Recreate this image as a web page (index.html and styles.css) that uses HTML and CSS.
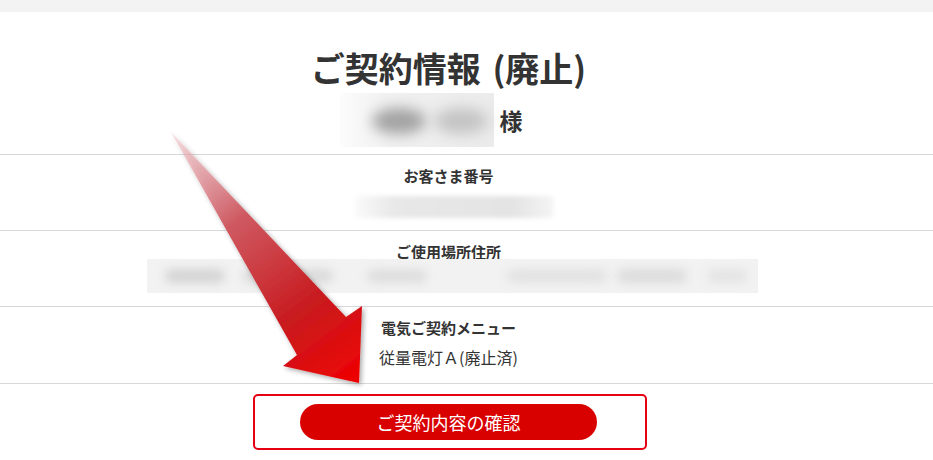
FILE: index.html
```html
<!DOCTYPE html>
<html lang="ja">
<head>
<meta charset="utf-8">
<title>ご契約情報 (廃止)</title>
<link rel="stylesheet" href="styles.css">
</head>
<body>
<div class="page">
  <div class="topbar"></div>
  <header class="head">
    <h1 class="title">ご契約情報 <span class="paren">(廃止)</span></h1>
    <div class="name-row">
      <div class="name-blur"><span class="blob b1"></span><span class="blob b2"></span></div>
      <span class="sama">様</span>
    </div>
  </header>
  <section class="row r1">
    <div class="label">お客さま番号</div>
    <div class="blur-num"></div>
  </section>
  <section class="row r2">
    <div class="label">ご使用場所住所</div>
    <div class="blur-addr">
      <span class="ab a1"></span><span class="ab a2"></span><span class="ab a3"></span><span class="ab a4"></span><span class="ab a5"></span><span class="ab a6"></span>
    </div>
  </section>
  <section class="row r3">
    <div class="label">電気ご契約メニュー</div>
    <div class="value">従量電灯Ａ(廃止済)</div>
  </section>
  <footer class="foot">
    <div class="frame">
      <button class="btn">ご契約内容の確認</button>
    </div>
  </footer>

  <svg class="arrow" width="933" height="460" viewBox="0 0 933 460">
    <defs>
      <linearGradient id="ag" gradientUnits="userSpaceOnUse" x1="171" y1="132" x2="359" y2="383">
        <stop offset="0" stop-color="#f2c4ca" stop-opacity="0.5"/>
        <stop offset="0.35" stop-color="#cf5a62"/>
        <stop offset="0.7" stop-color="#c81c20"/>
        <stop offset="1" stop-color="#f00000"/>
      </linearGradient>
      <filter id="sh" x="-20%" y="-20%" width="140%" height="140%">
        <feDropShadow dx="2" dy="2" stdDeviation="2.5" flood-color="#000" flood-opacity="0.35"/>
      </filter>
    </defs>
    <polygon points="171,132 346,317 362,306 359,383 283,366 297,355" fill="url(#ag)" filter="url(#sh)"/>
  </svg>
</div>
</body>
</html>
```
FILE: styles.css
```css
* { box-sizing: border-box; }
html, body { margin: 0; padding: 0; background: #fff; }
body {
  font-family: "Noto Sans CJK JP", "Noto Sans", sans-serif;
  color: #333;
}
.page { position: relative; width: 933px; height: 460px; overflow: hidden; }
.topbar { height: 12px; background: #f3f3f3; }

.head {
  padding: 34px 36px 0 0;
  height: 142px;
  display: flex;
  flex-direction: column;
  align-items: center;
}
.title {
  margin: 0;
  font-size: 34px;
  line-height: 44px;
  font-weight: 700;
  color: #333;
}
.paren { margin-left: 4px; }
.name-row {
  margin-top: 3px;
  display: flex;
  align-items: center;
  padding-right: 35px;
}
.name-blur {
  position: relative;
  width: 154px;
  height: 54px;
  background: linear-gradient(90deg, #fcfcfc 0%, #f1f1f1 30%, #ebebeb 100%);
}
.blob {
  position: absolute;
  top: 15px;
  height: 26px;
  border-radius: 50%;
  filter: blur(7px);
}
.b1 { left: 32px; width: 54px; background: #a2a2a2; }
.b2 { left: 94px; width: 54px; background: #c4c4c4; }
.sama {
  margin-left: 6px;
  font-size: 23px;
  font-weight: 700;
  color: #333;
}

.row {
  border-top: 1px solid #d8d8d8;
  height: 76px;
  padding: 11px 36px 0 0;
  display: flex;
  flex-direction: column;
  align-items: center;
}
.r3 { height: 77px; }
.label {
  font-size: 15px;
  line-height: 20px;
  font-weight: 700;
  color: #333;
}
.blur-num {
  margin-top: 10px;
  margin-left: 10px;
  width: 198px;
  height: 22px;
  background: linear-gradient(90deg, #fafafa 0%, #e8e8e8 20%, #e4e4e4 80%, #f4f4f4 100%);
  filter: blur(2px);
}
.blur-addr {
  position: relative;
  margin-top: -3px;
  margin-left: 8px;
  width: 611px;
  height: 34px;
  background: #f2f2f2;
}
.ab {
  position: absolute;
  top: 10px;
  height: 14px;
  background: #d4d4d4;
  border-radius: 7px;
  filter: blur(5px);
}
.a1 { left: 18px; width: 60px; }
.a2 { left: 96px; width: 90px; background: #dadada; }
.a3 { left: 220px; width: 60px; background: #dedede; }
.a4 { left: 360px; width: 100px; background: #e2e2e2; }
.a5 { left: 470px; width: 70px; background: #dcdcdc; }
.a6 { left: 560px; width: 40px; background: #e4e4e4; }
.value {
  margin-top: 7px;
  font-size: 16px;
  line-height: 24px;
  color: #333;
}

.foot {
  border-top: 1px solid #d8d8d8;
  padding: 10px 0 0 253px;
}
.frame {
  width: 394px;
  height: 56px;
  border: 2px solid #e60012;
  border-radius: 5px;
  display: flex;
  align-items: center;
  justify-content: center;
  padding-right: 3px;
}
.btn {
  width: 297px;
  height: 36px;
  border: none;
  border-radius: 18px;
  background: #d90000;
  color: #fff;
  font-family: "Noto Sans CJK JP", sans-serif;
  font-size: 18px;
  line-height: 36px;
  padding: 0;
}

.arrow { position: absolute; left: 0; top: 0; pointer-events: none; }
```
